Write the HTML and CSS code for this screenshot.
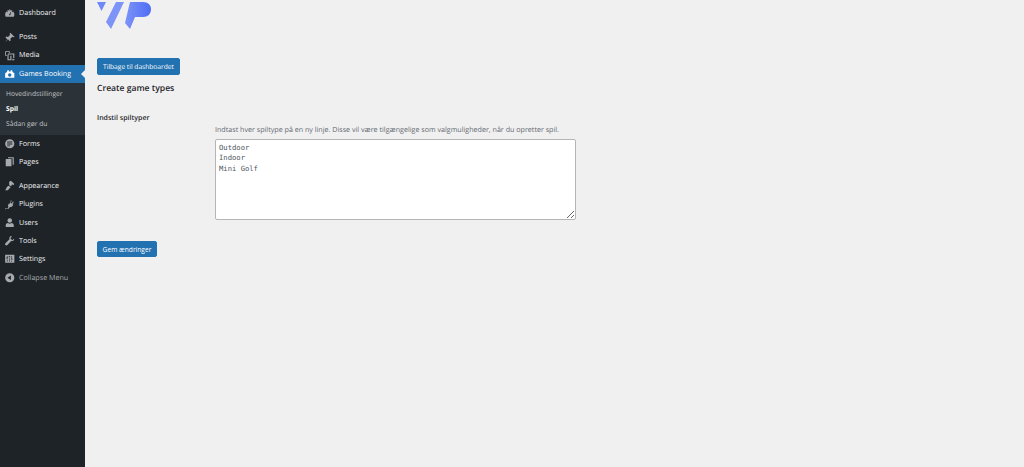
FILE: index.html
```html
<!DOCTYPE html>
<html>
<head>
    <title>Create game types</title>
    <meta name="viewport" content="width=device-width, initial-scale=1">
    <link rel="stylesheet" href="styles.css">
</head>

<body>
    <div class="admin">
        <nav class="sidebar">
            <ul class="menu">
                <li class="item">
                    <svg class="icon" viewBox="0 0 20 20"><path d="M3 17a8 8 0 1 1 14 0zM10 4a1 1 0 1 0 0 2 1 1 0 0 0 0-2zM5.500 7a1 1 0 1 0 0 2 1 1 0 0 0 0-2zM14.500 7a1 1 0 1 0 0 2 1 1 0 0 0 0-2zM9 14.500h2L12.500 7.500 9 13z" fill-rule="evenodd"/></svg>
                    <span>Dashboard</span>
                </li>
            </ul>
            <ul class="menu">
                <li class="item">
                    <svg class="icon" viewBox="0 0 20 20"><path d="M11 1.500l7.500 7-2 .8-2-1-3.500 3.500.5 3-1.500 1.500-3-3.500L2 18l3.800-5.500L2.500 9.500 4 8l3 .5L10.500 5l-.8-2z"/></svg>
                    <span>Posts</span>
                </li>
                <li class="item">
                    <svg class="icon" viewBox="0 0 20 20"><path d="M2 2h8v3H8.500V3.500h-5v5H5V10H2zM7 6h11v8h-2V8H7zM6 8v10h7v-8h-2v6H8V8zM15 15l3 .5V18h-4z"/></svg>
                    <span>Media</span>
                </li>
                <li class="item current">
                    <svg class="icon" viewBox="0 0 20 20"><path d="M2 9l3-2 1-3h2.500v2h3V4H14l1 3 3 2v8H2zM10 9a3 3 0 1 0 0 6 3 3 0 0 0 0-6z" fill-rule="evenodd"/></svg>
                    <span>Games Booking</span>
                </li>
                <li>
                    <ul class="submenu">
                        <li>Hovedindstillinger</li>
                        <li class="active">Spil</li>
                        <li>Sådan gør du</li>
                    </ul>
                </li>
                <li class="item">
                    <svg class="icon" viewBox="0 0 20 20"><path d="M10 2a8 8 0 1 1 0 16 8 8 0 0 1 0-16zM5.500 6v2h9V6zM5.500 9.500v2h9v-2zM5.500 13v1.500h5V13z" fill-rule="evenodd"/></svg>
                    <span>Forms</span>
                </li>
                <li class="item">
                    <svg class="icon" viewBox="0 0 20 20"><path d="M7 2h10v13h-2V4H7zM3 5h10v13H3z"/></svg>
                    <span>Pages</span>
                </li>
            </ul>
            <ul class="menu">
                <li class="item">
                    <svg class="icon" viewBox="0 0 20 20"><path d="M9 3l3-1.500 6 5.500-2 2-2-1.500-1.500 3.500L9 9zM8 10l3.500 2.500-1 1.500c-2 1-2.500 2.500-3.500 4H2c2-2 2-5 4-6.500z"/></svg>
                    <span>Appearance</span>
                </li>
                <li class="item">
                    <svg class="icon" viewBox="0 0 20 20"><path d="M12 2l1.500 1-2 3.500 2 1.200 2-3.500 1.500 1-2.200 3.800 1.500 1-1 1.500c-1 2-3 3-5 2.500L8 17H3l-1 1.500V16h4.500l1.300-2.500c-1-1.500-1-3 0-4.500l1-1.500 1.500 1z"/></svg>
                    <span>Plugins</span>
                </li>
                <li class="item">
                    <svg class="icon" viewBox="0 0 20 20"><path d="M10 2a4 4 0 0 1 4 4c0 2-1.500 4-4 4S6 8 6 6a4 4 0 0 1 4-4zM7 10.500c2 1.500 4 1.500 6 0 2.500.5 4 2 4 3.500v3.500H3V14c0-1.500 1.500-3 4-3.500z"/></svg>
                    <span>Users</span>
                </li>
                <li class="item">
                    <svg class="icon" viewBox="0 0 20 20"><path d="M17.500 6c.5 2-.5 4-2.500 4.500-1 .3-1.500.2-2.500 0L6 17.500c-1 1-2.500 1-3.500 0s-1-2 0-3L9.500 7.500c-.3-1-.3-2 0-3C10 2.500 12 1.500 14 2.500L11 5.500l3.500 3.500z"/></svg>
                    <span>Tools</span>
                </li>
                <li class="item">
                    <svg class="icon" viewBox="0 0 20 20"><path d="M2 3h16v14H2zM5 5v3H4v1.500h3V8H6V5zM13 5v5h-1v1.500h3V10h-1V5zM5 11v4h1v-4zM13 13v2h1v-2zM9 5v1H8v1.500h3V6h-1V5zM9 9v6h1V9z" fill-rule="evenodd"/></svg>
                    <span>Settings</span>
                </li>
                <li class="item collapse">
                    <svg class="icon" viewBox="0 0 20 20"><path d="M10 2a8 8 0 1 1 0 16 8 8 0 0 1 0-16zM12 6l-6 4 6 4z" fill-rule="evenodd"/></svg>
                    <span>Collapse Menu</span>
                </li>
            </ul>
        </nav>

        <main class="content">
            <svg class="logo" viewBox="0 0 55 30">
                <defs>
                    <linearGradient id="logo-fill" x1="0" y1="0" x2="1" y2="0">
                        <stop offset="0" stop-color="#7c93f8"/>
                        <stop offset="1" stop-color="#4f6df5"/>
                    </linearGradient>
                </defs>
                <path d="M0 2h9L4.500 11z" fill="#6f88f7"/>
                <path d="M19 2h8L14 29 9 22z" fill="#7c93f8"/>
                <path d="M33 2h13c5 0 8 3 8 7 0 5-3 8-8 8h-8l-5 12-5-6z" fill="url(#logo-fill)"/>
            </svg>

            <a class="button back" href="#">Tilbage til dashboardet</a>
            <h1>Create game types</h1>

            <form class="settings">
                <label for="types">Indstil spiltyper</label>
                <div class="field">
                    <p class="hint">Indtast hver spiltype på en ny linje. Disse vil være tilgængelige som valgmuligheder, når du opretter spil.</p>
                    <textarea id="types">Outdoor
Indoor
Mini Golf</textarea>
                </div>
            </form>

            <button type="button" class="button save">Gem ændringer</button>
        </main>
    </div>
</body>
</html>
```

FILE: styles.css
```css
* {
    box-sizing: border-box;
}

html,
body {
    height: 100%;
}

body {
    margin: 0;
    background-color: #f0f0f1;
    color: #3c434a;
    font-family: "Open Sans", "Noto Sans", sans-serif;
    font-size: 7.150px;
    text-rendering: geometricPrecision;
    overflow: hidden;
}

.admin {
    display: flex;
    height: 100%;
}

.sidebar {
    flex: none;
    width: 85px;
    padding-top: 4px;
    background-color: #1d2327;
    color: #f0f0f1;
}

.menu {
    list-style: none;
    margin: 0 0 6px;
    padding: 0;
}

.item {
    position: relative;
    display: flex;
    align-items: center;
    gap: 3.500px;
    height: 18.200px;
    padding-left: 4px;
}

.icon {
    flex: none;
    width: 11.500px;
    height: 11.500px;
    fill: #a7aaad;
}

.item.current {
    background-color: #2271b1;
    color: #fff;
}

.item.current .icon {
    fill: #fff;
}

.item.current::after {
    content: "";
    position: absolute;
    right: 0;
    top: 5px;
    border: 4px solid transparent;
    border-right-color: #f0f0f1;
    border-left-width: 0;
}

.item.collapse {
    margin-top: 0.600px;
    color: #a7aaad;
}

.submenu {
    list-style: none;
    margin: 0;
    padding: 3px 0 4px 6px;
    height: 52px;
    background-color: #2c3338;
    color: #c3c4c7;
    font-size: 6.700px;
}

.submenu li {
    height: 15px;
    line-height: 15px;
}

.submenu .active {
    color: #fff;
    font-weight: 700;
}

.content {
    flex: 1;
    padding-left: 12px;
}

.logo {
    display: block;
    width: 55px;
    height: 30px;
}

.button {
    display: block;
    height: 16.500px;
    padding: 0;
    border: 1px solid #2271b1;
    border-radius: 2px;
    background-color: #2271b1;
    color: #fff;
    font-family: inherit;
    font-size: 6.650px;
    line-height: 15.500px;
    text-align: center;
    text-decoration: none;
    white-space: nowrap;
}

.back {
    width: 83px;
    margin-top: 28px;
}

h1 {
    margin: 6px 0 0;
    color: #1d2327;
    font-size: 8.600px;
    font-weight: 600;
    line-height: 14px;
}

.settings {
    display: flex;
    margin-top: 15px;
}

label {
    flex: none;
    width: 118px;
    padding-top: 3px;
    color: #1d2327;
    font-size: 7px;
    font-weight: 600;
    line-height: 12px;
}

.field {
    padding-top: 14px;
}

.hint {
    margin: 0;
    color: #646970;
    font-size: 7.150px;
    line-height: 12px;
}

textarea {
    display: block;
    width: 361px;
    height: 81px;
    margin-top: 3px;
    padding: 3px;
    border: 1px solid #b4b5b7;
    border-radius: 2px;
    background-color: #fff;
    color: #50575e;
    font-family: "DejaVu Sans Mono", monospace;
    font-size: 7.200px;
    line-height: 10.500px;
}

.save {
    width: 60px;
    margin-top: 21px;
}
```
